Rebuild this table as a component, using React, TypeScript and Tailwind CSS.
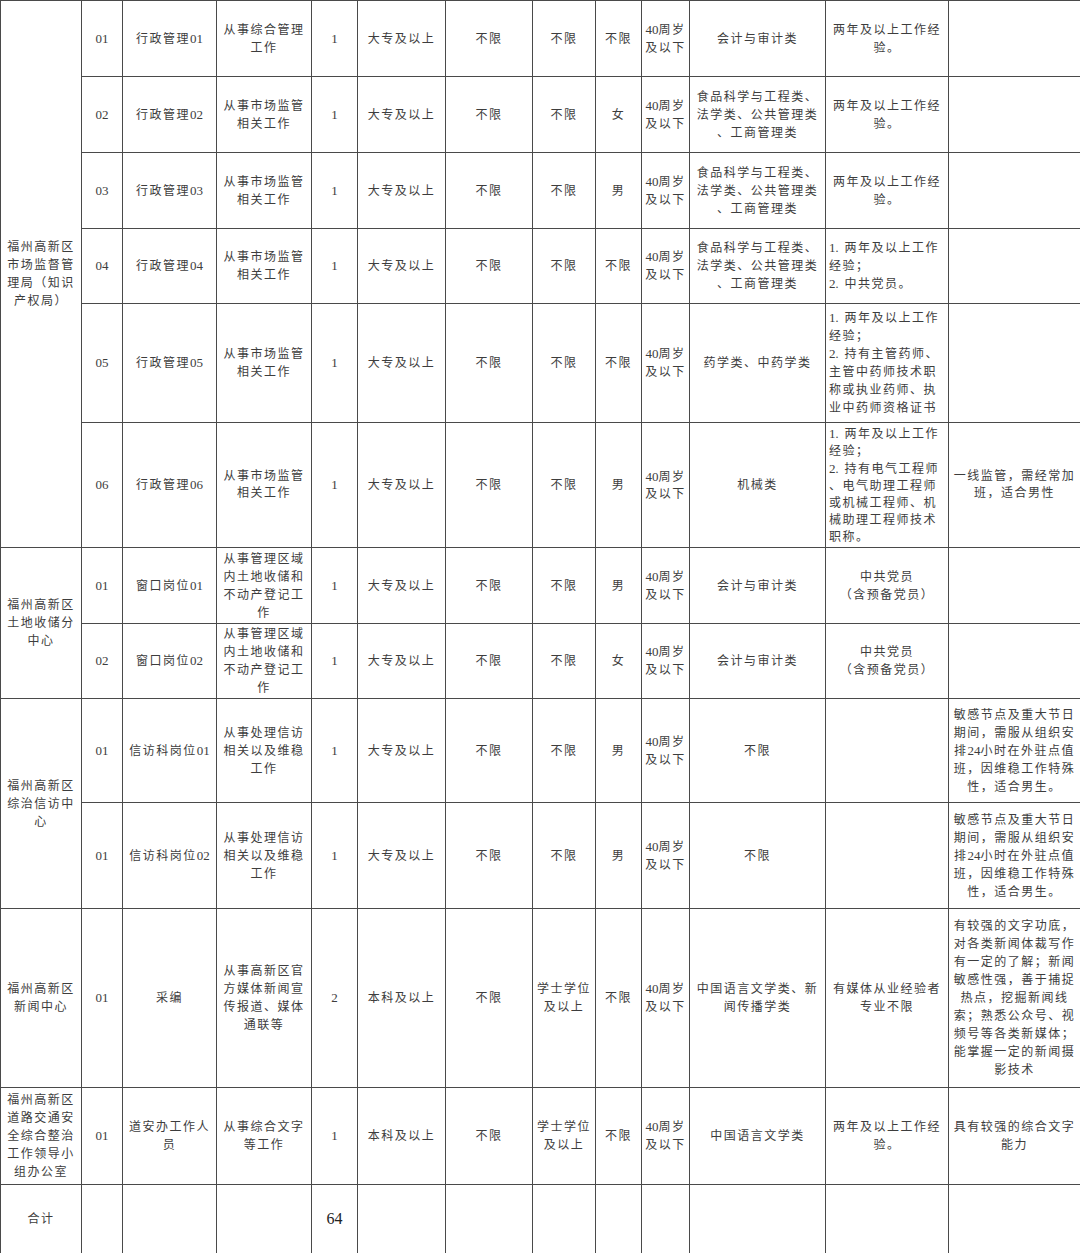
const font = '"Liberation Serif", "Noto Sans CJK SC", serif';

type Row = {
  h: string;
  org?: { text: string[]; span: number };
  cells: (string | string[])[];
  left?: number[];
  tight?: boolean;
};

const policy = ['从事市场监管', '相关工作'];
const majors3 = ['食品科学与工程类、', '法学类、公共管理类', '、工商管理类'];
const age = ['40周岁', '及以下'];
const twoYears = ['两年及以上工作经', '验。'];
const window = ['从事管理区域', '内土地收储和', '不动产登记工', '作'];
const xinfang = ['从事处理信访', '相关以及维稳', '工作'];
const xinfangNote = ['敏感节点及重大节日', '期间，需服从组织安', '排24小时在外驻点值', '班，因维稳工作特殊', '性，适合男生。'];

const rows: Row[] = [
  {
    h: 'h-[76px]',
    org: { text: ['福州高新区', '市场监督管', '理局（知识', '产权局）'], span: 6 },
    cells: ['01', '行政管理01', ['从事综合管理', '工作'], '1', '大专及以上', '不限', '不限', '不限', age, '会计与审计类', twoYears, ''],
  },
  {
    h: 'h-[76px]',
    cells: ['02', '行政管理02', policy, '1', '大专及以上', '不限', '不限', '女', age, majors3, twoYears, ''],
  },
  {
    h: 'h-[76px]',
    cells: ['03', '行政管理03', policy, '1', '大专及以上', '不限', '不限', '男', age, majors3, twoYears, ''],
  },
  {
    h: 'h-[75px]',
    cells: ['04', '行政管理04', policy, '1', '大专及以上', '不限', '不限', '不限', age, majors3, ['1. 两年及以上工作', '经验；', '2. 中共党员。'], ''],
    left: [10],
  },
  {
    h: 'h-[119px]',
    cells: [
      '05', '行政管理05', policy, '1', '大专及以上', '不限', '不限', '不限', age, '药学类、中药学类',
      ['1. 两年及以上工作', '经验；', '2. 持有主管药师、', '主管中药师技术职', '称或执业药师、执', '业中药师资格证书'],
      '',
    ],
    left: [10],
  },
  {
    h: 'h-[125px]',
    cells: [
      '06', '行政管理06', policy, '1', '大专及以上', '不限', '不限', '男', age, '机械类',
      ['1. 两年及以上工作', '经验；', '2. 持有电气工程师', '、电气助理工程师', '或机械工程师、机', '械助理工程师技术', '职称。'],
      ['一线监管，需经常加', '班，适合男性'],
    ],
    left: [10],
    tight: true,
  },
  {
    h: 'h-[76px]',
    org: { text: ['福州高新区', '土地收储分', '中心'], span: 2 },
    cells: ['01', '窗口岗位01', window, '1', '大专及以上', '不限', '不限', '男', age, '会计与审计类', ['中共党员', '（含预备党员）'], ''],
  },
  {
    h: 'h-[75px]',
    cells: ['02', '窗口岗位02', window, '1', '大专及以上', '不限', '不限', '女', age, '会计与审计类', ['中共党员', '（含预备党员）'], ''],
  },
  {
    h: 'h-[104px]',
    org: { text: ['福州高新区', '综治信访中', '心'], span: 2 },
    cells: ['01', '信访科岗位01', xinfang, '1', '大专及以上', '不限', '不限', '男', age, '不限', '', xinfangNote],
  },
  {
    h: 'h-[106px]',
    cells: ['01', '信访科岗位02', xinfang, '1', '大专及以上', '不限', '不限', '男', age, '不限', '', xinfangNote],
  },
  {
    h: 'h-[179px]',
    org: { text: ['福州高新区', '新闻中心'], span: 1 },
    cells: [
      '01', '采编', ['从事高新区官', '方媒体新闻宣', '传报道、媒体', '通联等'], '2', '本科及以上', '不限', ['学士学位', '及以上'], '不限', age,
      ['中国语言文学类、新', '闻传播学类'], ['有媒体从业经验者', '专业不限'],
      ['有较强的文字功底，', '对各类新闻体裁写作', '有一定的了解；新闻', '敏感性强，善于捕捉', '热点，挖掘新闻线', '索；熟悉公众号、视', '频号等各类新媒体；', '能掌握一定的新闻摄', '影技术'],
    ],
  },
  {
    h: 'h-[97px]',
    org: { text: ['福州高新区', '道路交通安', '全综合整治', '工作领导小', '组办公室'], span: 1 },
    cells: [
      '01', ['道安办工作人', '员'], ['从事综合文字', '等工作'], '1', '本科及以上', '不限', ['学士学位', '及以上'], '不限', age,
      '中国语言文学类', twoYears, ['具有较强的综合文字', '能力'],
    ],
  },
];

const widths = ['w-[81px]', 'w-[41px]', 'w-[94px]', 'w-[95px]', 'w-[46px]', 'w-[88px]', 'w-[87px]', 'w-[63px]', 'w-[46px]', 'w-[48px]', 'w-[136px]', 'w-[123px]', 'w-[132px]'];

// digits in the scan are set without extra spacing, CJK characters with it
const Text = ({ line }: { line: string }) => {
  const parts = line.split(/(\d+)/);
  return (
    <>
      {parts.map((p, i) =>
        /^\d+$/.test(p) ? (
          <span key={i} className="tracking-normal text-[13px]">
            {p}
          </span>
        ) : (
          <span key={i}>{p}</span>
        )
      )}
    </>
  );
};

const Lines = ({ value }: { value: string | string[] }) => {
  const lines = Array.isArray(value) ? value : [value];
  return (
    <>
      {lines.map((line, i) => (
        <span key={i} className="block whitespace-nowrap">
          <Text line={line} />
        </span>
      ))}
    </>
  );
};

const cellBase = 'border border-[#4a4a4a] px-[3px] align-middle text-[12px] tracking-[1.5px] text-[#3d3d3d]';

export default function App() {
  return (
    <div className="w-[1080px] h-[1253px] bg-white overflow-hidden" style={{ fontFamily: font }}>
      <table className="table-fixed border-collapse w-[1080px]">
        <colgroup>
          {widths.map((w, i) => (
            <col key={i} className={w} />
          ))}
        </colgroup>
        <tbody>
          {rows.map((row, ri) => (
            <tr key={ri} className={row.h}>
              {row.org && (
                <td rowSpan={row.org.span} className={`${cellBase} leading-[18px] text-center`}>
                  <Lines value={row.org.text} />
                </td>
              )}
              {row.cells.map((c, ci) => (
                <td
                  key={ci}
                  className={`${cellBase} ${row.tight ? 'leading-[17px]' : 'leading-[18px]'} ${row.left?.includes(ci) ? 'text-left' : 'text-center'} ${ci === 0 || ci === 3 ? 'text-[#2a2a2a]' : ''}`}
                >
                  <Lines value={c} />
                </td>
              ))}
            </tr>
          ))}
          <tr className="h-[69px]">
            <td className={`${cellBase} text-center`}>合计</td>
            <td className={cellBase}></td>
            <td className={cellBase}></td>
            <td className={cellBase}></td>
            <td className={`${cellBase} text-center text-[16px] tracking-normal text-[#222]`}>64</td>
            <td className={cellBase}></td>
            <td className={cellBase}></td>
            <td className={cellBase}></td>
            <td className={cellBase}></td>
            <td className={cellBase}></td>
            <td className={cellBase}></td>
            <td className={cellBase}></td>
            <td className={cellBase}></td>
          </tr>
        </tbody>
      </table>
    </div>
  );
}
